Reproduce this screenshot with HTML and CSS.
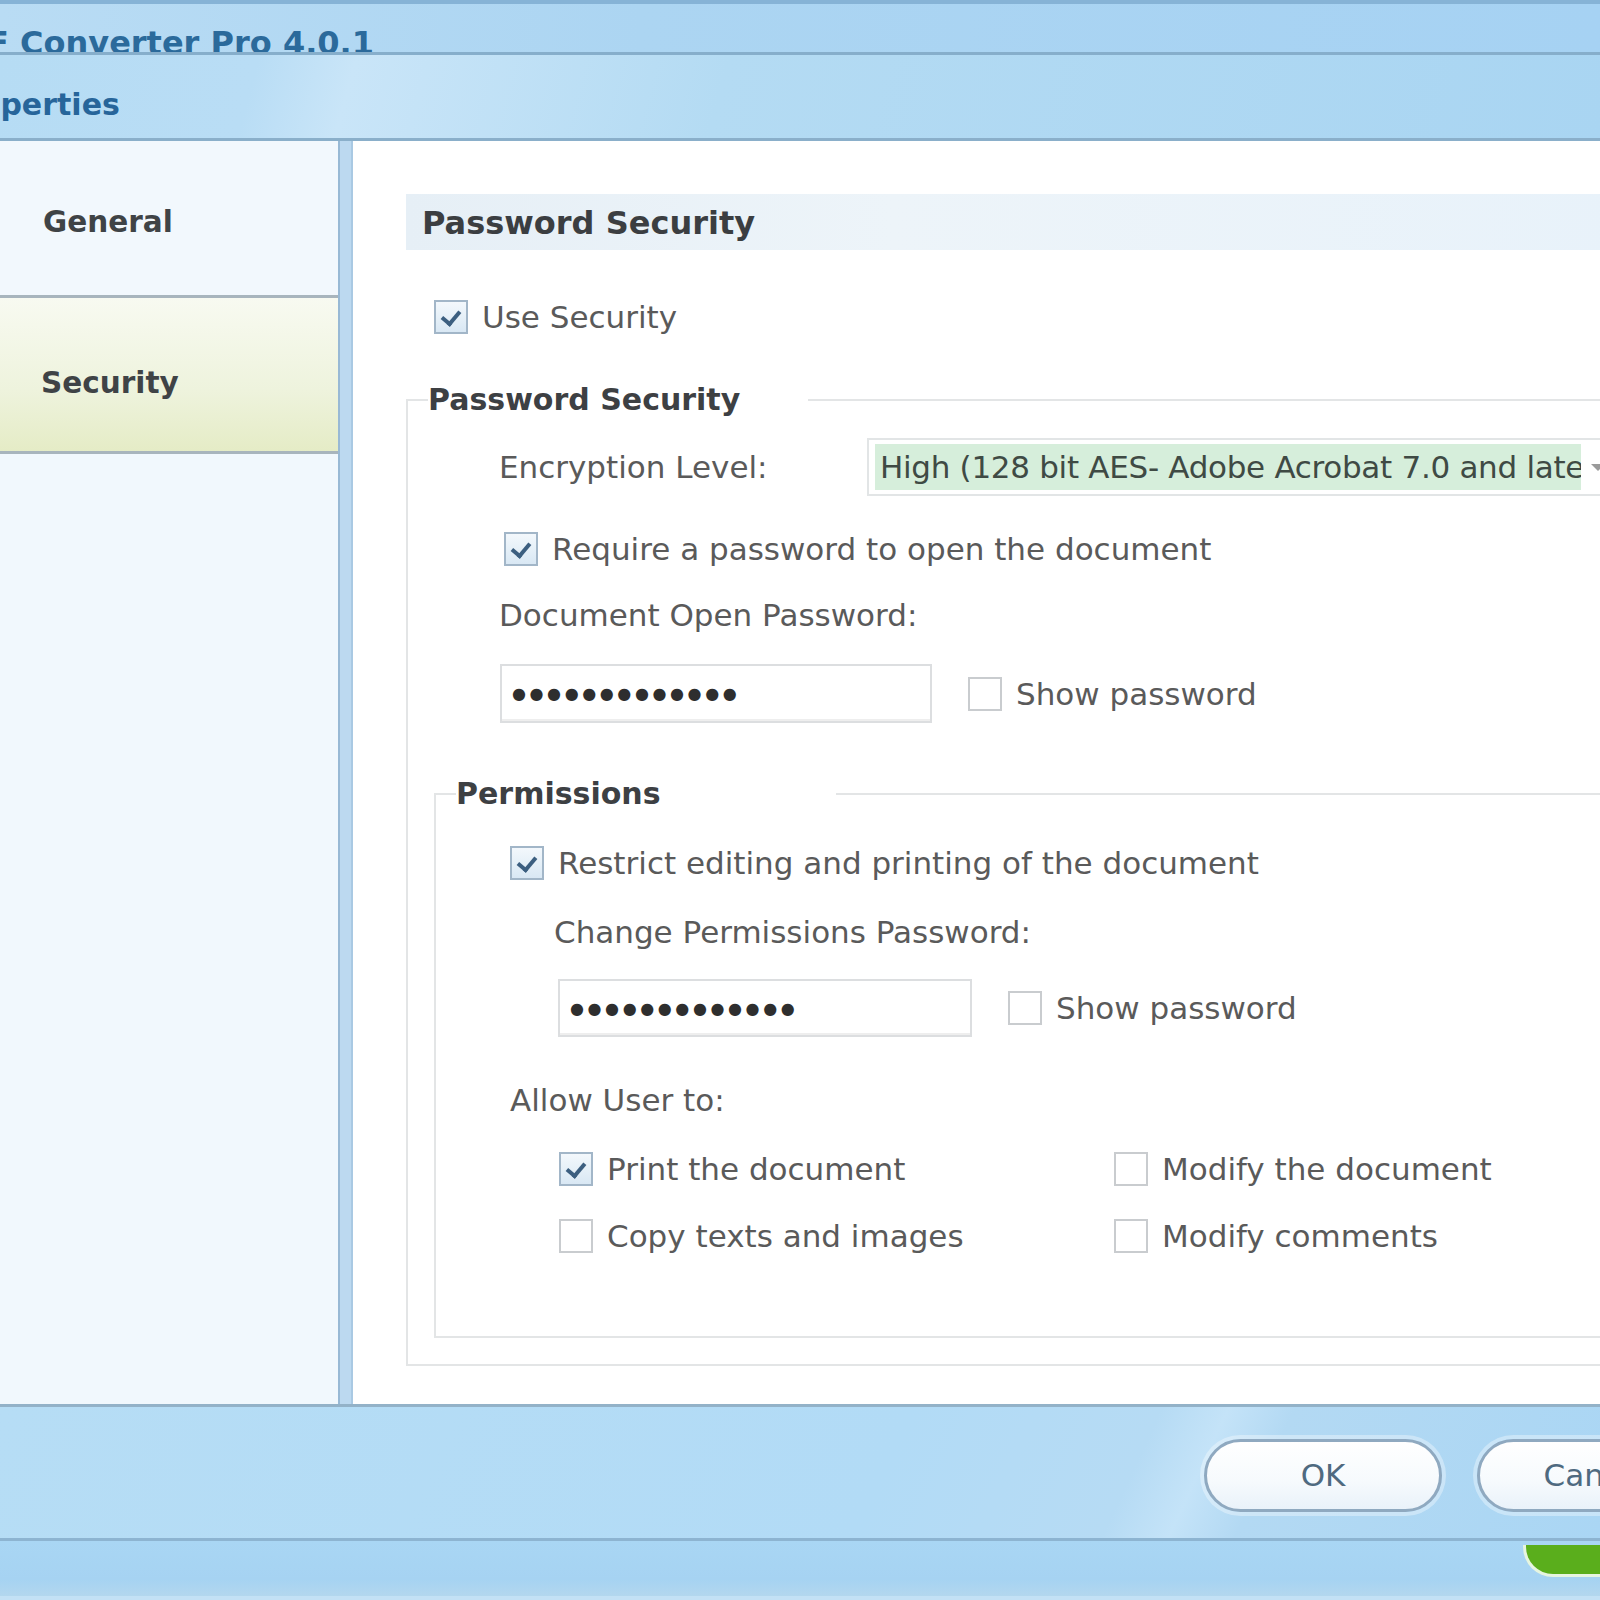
FILE: index.html
```html
<!DOCTYPE html>
<html lang="en">
<head>
    <meta charset="UTF-8">
    <title>Properties</title>
    <link rel="stylesheet" href="styles.css">
</head>
<body>
    <div id="dialog">
        <div class="titlebar"><span class="title">PDF Converter Pro 4.0.1</span></div>
        <div class="subbar"><span class="subtitle">Properties</span></div>

        <div class="main">
            <div class="sidebar">
                <div class="nav-item">General</div>
                <div class="nav-item selected">Security</div>
            </div>
            <div class="divider"></div>

            <div class="content">
                <div class="section-head">Password Security</div>

                <div class="check-row use-row">
                    <span class="cb checked"></span>
                    <span>Use Security</span>
                </div>

                <fieldset class="group outer">
                    <legend>Password Security</legend>

                    <div class="enc-row">
                        <span class="enc-label">Encryption Level:</span>
                        <div class="select">
                            <span class="select-text">High (128 bit AES- Adobe Acrobat 7.0 and later)</span>
                            <span class="select-arrow"></span>
                        </div>
                    </div>

                    <div class="check-row require-row">
                        <span class="cb checked"></span>
                        <span>Require a password to open the document</span>
                    </div>

                    <div class="label doc-label">Document Open Password:</div>

                    <div class="pw-row doc-pw">
                        <div class="pw-input">&#9679;&#9679;&#9679;&#9679;&#9679;&#9679;&#9679;&#9679;&#9679;&#9679;&#9679;&#9679;&#9679;</div>
                        <div class="check-row">
                            <span class="cb"></span>
                            <span>Show password</span>
                        </div>
                    </div>

                    <fieldset class="group inner">
                        <legend>Permissions</legend>

                        <div class="check-row restrict-row">
                            <span class="cb checked"></span>
                            <span>Restrict editing and printing of the document</span>
                        </div>

                        <div class="label change-label">Change Permissions Password:</div>

                        <div class="pw-row change-pw">
                            <div class="pw-input">&#9679;&#9679;&#9679;&#9679;&#9679;&#9679;&#9679;&#9679;&#9679;&#9679;&#9679;&#9679;&#9679;</div>
                            <div class="check-row">
                                <span class="cb"></span>
                                <span>Show password</span>
                            </div>
                        </div>

                        <div class="label allow-label">Allow User to:</div>

                        <div class="allow-grid">
                            <div class="check-row">
                                <span class="cb checked"></span>
                                <span>Print the document</span>
                            </div>
                            <div class="check-row">
                                <span class="cb"></span>
                                <span>Modify the document</span>
                            </div>
                            <div class="check-row">
                                <span class="cb"></span>
                                <span>Copy texts and images</span>
                            </div>
                            <div class="check-row">
                                <span class="cb"></span>
                                <span>Modify comments</span>
                            </div>
                        </div>
                    </fieldset>
                </fieldset>
            </div>
        </div>

        <div class="footer">
            <div class="buttons">
                <div class="btn">OK</div>
                <div class="btn">Cancel</div>
            </div>
        </div>
        <div class="bottom-strip">
            <span class="green-pill"></span>
        </div>
    </div>
</body>
</html>
```

FILE: styles.css
```css
*{
    margin: 0;
    padding: 0;
    box-sizing: border-box;
}
body{
    width: 1600px;
    height: 1600px;
    overflow: hidden;
    font-family: "DejaVu Sans", sans-serif;
    font-size: 31px;
    color: #5a5a5a;
}
#dialog{
    width: 1600px;
    height: 1600px;
    display: flex;
    flex-direction: column;
    overflow: hidden;
}

/* header */
.titlebar{
    height: 55px;
    border-top: 4px solid #86b3d6;
    border-bottom: 3px solid #86aecb;
    background: linear-gradient(to right, #b9dcf4 0%, #acd5f2 40%, #a6d2f3 100%);
    overflow: hidden;
    white-space: nowrap;
}
.title{
    display: block;
    margin-left: -63px;
    margin-top: 22px;
    line-height: 34px;
    font-weight: bold;
    font-size: 32px;
    color: #2b6a9b;
}
.subbar{
    height: 86px;
    border-bottom: 3px solid #8aafca;
    background: linear-gradient(105deg, #b6dcf4 0%, #b9ddf5 16%, #c9e5f8 22%, #b4dbf3 45%, #a9d5f2 100%);
    overflow: hidden;
    white-space: nowrap;
}
.subtitle{
    display: block;
    margin-left: -57px;
    margin-top: 32px;
    font-weight: bold;
    font-size: 30px;
    color: #27659a;
}

/* body */
.main{
    height: 1263px;
    display: flex;
}
.sidebar{
    width: 338px;
    background: #f1f8fd;
}
.nav-item{
    height: 157px;
    padding-left: 43px;
    padding-top: 64px;
    border-bottom: 3px solid #a8b5bd;
    font-weight: bold;
    font-size: 29.5px;
    color: #3f4346;
    background: #f2f8fd;
}
.nav-item.selected{
    height: 156px;
    padding-left: 41px;
    padding-top: 68px;
    background: linear-gradient(to bottom, #f8faf1 0%, #eef3dd 60%, #e5ecc6 100%);
}
.divider{
    width: 15px;
    background: #bcd9f0;
    border-left: 2px solid #98b9d5;
    border-right: 2px solid #a9c9e3;
}
.content{
    flex: 1;
    background: #ffffff;
    padding-left: 53px;
    padding-top: 53px;
    overflow: hidden;
}
.section-head{
    height: 56px;
    margin-right: -20px;
    padding-left: 16px;
    line-height: 58px;
    font-weight: bold;
    font-size: 32px;
    color: #3b3e41;
    background: linear-gradient(to right, #e6eff6 0%, #edf4f9 40%, #e8f2fa 100%);
}

.check-row{
    display: flex;
    align-items: center;
    height: 36px;
    white-space: nowrap;
}
.cb{
    width: 34px;
    height: 34px;
    margin-right: 14px;
    border: 2px solid #c9cccf;
    background: #ffffff;
    flex: none;
    position: relative;
}
.cb.checked{
    border-color: #a2b6c8;
    background: linear-gradient(to bottom, #f3f8fc, #d9e8f4);
}
.cb.checked::after{
    content: "";
    position: absolute;
    left: 9px;
    top: 5px;
    width: 8px;
    height: 14px;
    border-right: 4px solid #3c5f80;
    border-bottom: 4px solid #3c5f80;
    transform: rotate(40deg);
}
.use-row{
    margin-top: 49px;
    margin-left: 28px;
}

/* fieldsets */
.group{
    border: 2px solid #e3e5e6;
    border-right: none;
    min-width: 0;
}
.group legend{
    width: 380px;
    height: 36px;
    line-height: 36px;
    font-weight: bold;
    font-size: 30px;
    color: #3d4043;
    background: #ffffff;
    white-space: nowrap;
}
.outer{
    margin-top: 47px;
    margin-right: -40px;
    padding: 0 0 26px 26px;
}
.outer > legend{
    margin-left: -6px;
}
.inner{
    margin-top: 53px;
    padding: 0 0 82px 20px;
}

.enc-row{
    display: flex;
    align-items: center;
    height: 58px;
    margin-top: 20px;
    margin-left: 65px;
}
.enc-label{
    width: 368px;
    white-space: nowrap;
}
.select{
    flex: 1;
    height: 58px;
    display: flex;
    align-items: center;
    padding: 5px 6px;
    border: 2px solid #e2e5e6;
    border-right: none;
    overflow: hidden;
    white-space: nowrap;
}
.select-text{
    width: 706px;
    height: 46px;
    line-height: 46px;
    padding-left: 5px;
    overflow: hidden;
    background: #d6eedb;
    color: #3f4a44;
    letter-spacing: -0.3px;
    flex: none;
}
.select-arrow{
    margin-left: 10px;
    width: 0;
    height: 0;
    border-left: 7px solid transparent;
    border-right: 7px solid transparent;
    border-top: 7px solid #9a9a9a;
}
.require-row{
    margin-top: 35px;
    margin-left: 70px;
}
.label{
    height: 36px;
    line-height: 36px;
    white-space: nowrap;
}
.doc-label{
    margin-top: 30px;
    margin-left: 65px;
}
.pw-row{
    display: flex;
    align-items: center;
}
.pw-input{
    height: 59px;
    padding-left: 10px;
    border: 2px solid #dcdee0;
    box-shadow: inset 0 -2px 0 #eeeeee;
    line-height: 55px;
    font-size: 16px;
    letter-spacing: 3.6px;
    color: #2e2e2e;
    margin-right: 36px;
    white-space: nowrap;
    overflow: hidden;
}
.doc-pw{
    margin-top: 31px;
    margin-left: 66px;
}
.doc-pw .pw-input{
    width: 432px;
}
.restrict-row{
    margin-top: 33px;
    margin-left: 54px;
}
.change-label{
    margin-top: 33px;
    margin-left: 98px;
}
.change-pw{
    margin-top: 29px;
    margin-left: 102px;
}
.change-pw .pw-input{
    width: 414px;
    height: 58px;
}
.allow-label{
    margin-top: 45px;
    margin-left: 54px;
}
.allow-grid{
    display: grid;
    grid-template-columns: 555px 555px;
    row-gap: 31px;
    margin-top: 33px;
    margin-left: 103px;
}

/* footer */
.footer{
    height: 137px;
    border-top: 3px solid #93b2c8;
    border-bottom: 3px solid #8db4d1;
    background: linear-gradient(115deg, #b6ddf5 0%, #b2dbf6 55%, #b6dbf4 70%, #c4e3f8 74%, #b3d9f3 78%, #aad6f4 100%);
    display: flex;
    justify-content: flex-end;
    overflow: hidden;
}
.buttons{
    display: flex;
    gap: 35px;
    margin-top: 32px;
    margin-right: -115px;
}
.btn{
    width: 238px;
    height: 73px;
    border: 3px solid #8fa9c0;
    border-radius: 37px;
    background: linear-gradient(to bottom, #ffffff 0%, #f6fafd 60%, #e9f2fa 100%);
    box-shadow: 0 0 0 4px rgba(255, 255, 255, 0.35);
    text-align: center;
    line-height: 66px;
    font-size: 31px;
    color: #4f6a80;
}
.bottom-strip{
    flex: 1;
    background: linear-gradient(to bottom, #a9d6f4 0%, #a6d3f2 70%, #b3d7ee 100%);
    border-bottom: 4px solid #c3e1f5;
    position: relative;
    overflow: hidden;
}
.green-pill{
    position: absolute;
    left: 1523px;
    top: 4px;
    width: 200px;
    height: 32px;
    border-radius: 0 0 0 30px;
    background: #5aae1c;
    border: 3px solid #e6f5e0;
    border-top: none;
}
```
